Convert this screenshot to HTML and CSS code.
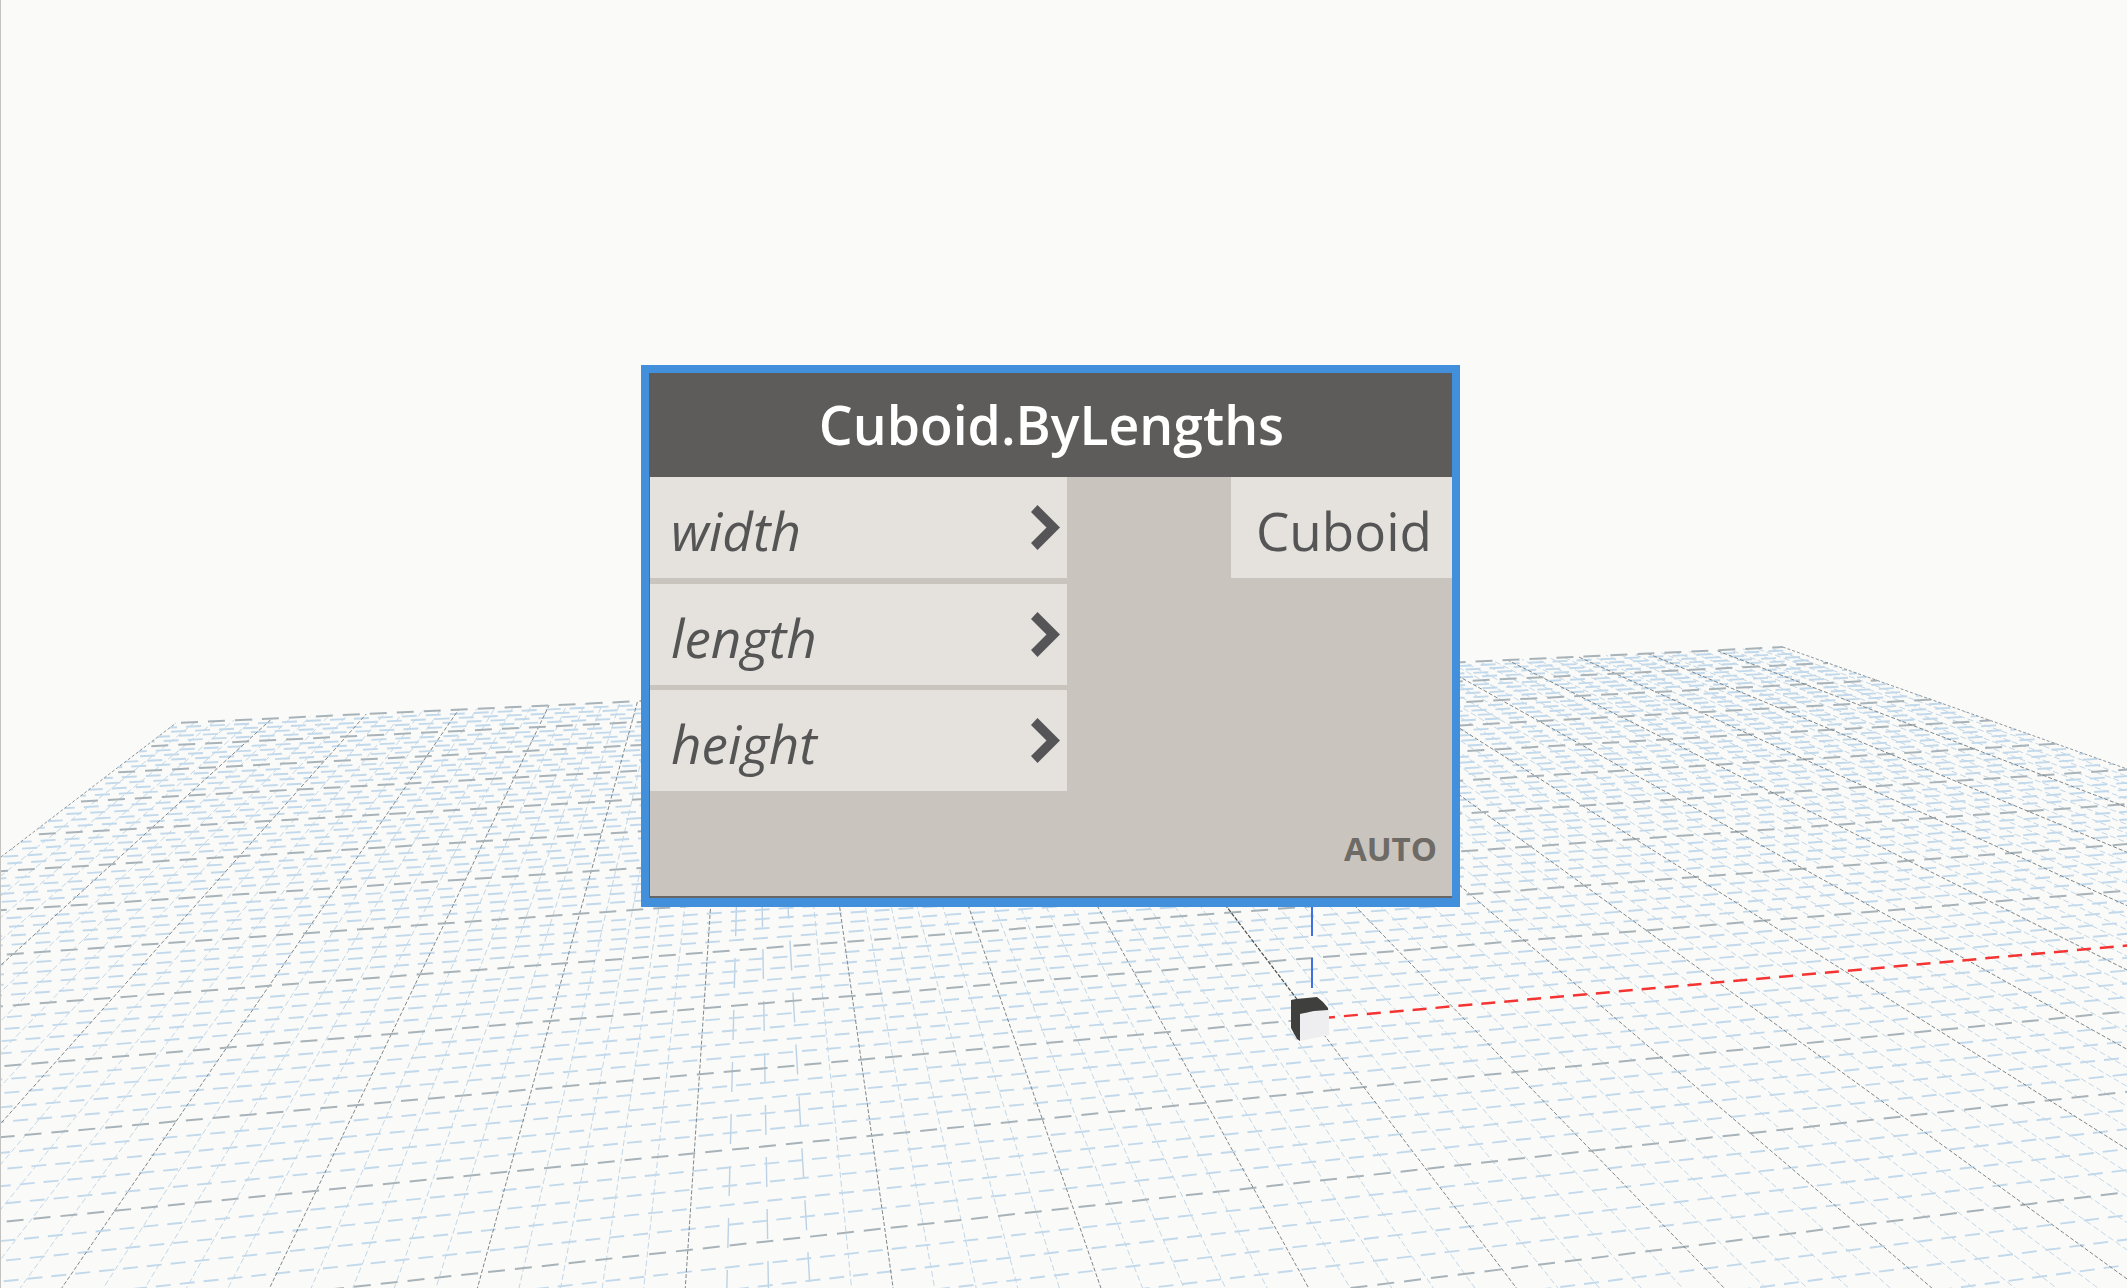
FILE: index.html
```html
<!DOCTYPE html>
<html lang="en">
<head>
<meta charset="utf-8">
<title>Cuboid.ByLengths</title>
<link rel="stylesheet" href="styles.css">
</head>
<body>
<main class="canvas">
  <svg class="scene" id="scene" width="2127" height="1288" viewBox="0 0 2127 1288" xmlns="http://www.w3.org/2000/svg">
    <g id="grid"></g>
    <line class="axis-z" x1="1312" y1="906" x2="1312" y2="991"></line>
    <polygon class="cube-light" points="1300,1014 1314,1011 1329,1008 1329,1035 1300,1041"></polygon>
    <polygon class="cube-dark" points="1291,1000 1296,999 1317,997 1323,1002 1328,1008 1328,1010 1314,1011 1300,1014 1300,1041 1297,1039 1291,1028"></polygon>
  </svg>
  <article class="node">
    <div class="node-frame">
      <header class="node-title">Cuboid.ByLengths</header>
      <div class="node-body">
        <div class="ports-in">
          <div class="port port-in"><span class="port-name">width</span><svg class="chev" width="29" height="45" viewBox="0 0 29 45"><path d="M0 7 L6.500 0 L29 22.500 L6.500 45 L0 38 L15.500 22.500 Z"></path></svg></div>
          <div class="port port-in"><span class="port-name">length</span><svg class="chev" width="29" height="45" viewBox="0 0 29 45"><path d="M0 7 L6.500 0 L29 22.500 L6.500 45 L0 38 L15.500 22.500 Z"></path></svg></div>
          <div class="port port-in"><span class="port-name">height</span><svg class="chev" width="29" height="45" viewBox="0 0 29 45"><path d="M0 7 L6.500 0 L29 22.500 L6.500 45 L0 38 L15.500 22.500 Z"></path></svg></div>
        </div>
        <div class="port port-out">Cuboid</div>
      </div>
      <div class="node-mode">AUTO</div>
    </div>
  </article>
</main>
<script src="grid.js"></script>
</body>
</html>
```
FILE: styles.css
```css
* { box-sizing: border-box; }
html, body { margin: 0; padding: 0; height: 100%; background: #fafaf8; overflow: hidden; }
.canvas {
  position: relative;
  width: 2127px;
  height: 1288px;
  background: #fafaf8;
  font-family: "Open Sans", "Noto Sans", sans-serif;
  overflow: hidden;
}
.canvas::before {
  content: "";
  position: absolute;
  left: 0; top: 0; bottom: 0;
  width: 1px;
  background: #c2c2c0;
  z-index: 3;
}
.scene { position: absolute; left: 0; top: 0; display: block; }

.g-minor-x { stroke: #c2d9eb; stroke-width: 1.9; stroke-dasharray: 15 9; fill: none; }
.g-minor-y { stroke: #c2d7e8; stroke-width: 1; stroke-dasharray: 6 3; fill: none; }
.g-minor-v { stroke: #bcd2e4; stroke-width: 1.4; stroke-dasharray: 30 22; fill: none; }
.g-major-x { stroke: #a8b3b9; stroke-width: 2; stroke-dasharray: 17 10; fill: none; }
.g-major-y { stroke: #7f878c; stroke-width: 1; stroke-dasharray: 4 2; fill: none; }
.g-edge { stroke: #8f979c; stroke-width: 1; stroke-dasharray: 3 2; fill: none; }
.axis-y { stroke: #4a4d4c; stroke-width: 1.2; stroke-dasharray: 4 1.500; fill: none; }
.axis-x { stroke: #f43333; stroke-width: 2.500; stroke-dasharray: 14 9; fill: none; }
.axis-z { stroke: #3f6fe0; stroke-width: 2; stroke-dasharray: 30 22; fill: none; }
.cube-dark { fill: #3f403e; }
.cube-light { fill: #eeeef0; }

.node {
  position: absolute;
  left: 641px;
  top: 365px;
  width: 819px;
  height: 542px;
  border: 8px solid #428fdb;
  border-bottom-width: 9px;
}
.node-frame {
  position: relative;
  display: flex;
  flex-direction: column;
  height: 100%;
  background: #c9c5be;
  border-left: 1px solid #686664;
  border-bottom: 2px solid #686664;
}
.node-title {
  height: 104px;
  flex: none;
  margin-left: -1px;
  display: flex;
  align-items: center;
  justify-content: center;
  background: #5e5c5a;
  color: #ffffff;
  font-size: 53.500px;
  font-weight: 600;
  line-height: 1;
  padding-left: 2px;
  padding-bottom: 1px;
}
.node-body {
  display: flex;
  justify-content: space-between;
  align-items: flex-start;
}
.ports-in {
  display: flex;
  flex-direction: column;
  gap: 5.5px;
  width: 417px;
}
.port {
  height: 101px;
  background: #e5e2dd;
  color: #555555;
  font-size: 53px;
  line-height: 1;
}
.port-in {
  display: flex;
  align-items: center;
  justify-content: space-between;
  padding: 0 7px 0 21px;
}
.port-name { font-style: italic; padding-top: 6px; }
.port-out {
  width: 221px;
  display: flex;
  align-items: center;
  justify-content: flex-end;
  padding: 6px 20px 0 0;
}
.chev { display: block; flex: none; }
.chev path { fill: #555558; }
.node-mode {
  position: absolute;
  right: 15px;
  bottom: 31px;
  color: #6e6a65;
  font-size: 33px;
  font-weight: 700;
  line-height: 1;
}
```
FILE: grid.js
```js
(function () {
  var VP1 = [9470, 284], VP2 = [752, 282], O = [1312, 1019];
  var G = 50, a = 0.1746 / G, b = 0.8450 / G, YMAX = 1330;
  var NS = 'http://www.w3.org/2000/svg';
  var root = document.getElementById('grid');

  function project(u, v) {
    var w = 1 + a * u + b * v;
    return [
      (a * u * VP1[0] + b * v * VP2[0] + O[0]) / w,
      (a * u * VP1[1] + b * v * VP2[1] + O[1]) / w
    ];
  }
  function seg(p, q, cls, seed) {
    var l = document.createElementNS(NS, 'line');
    l.setAttribute('x1', p[0].toFixed(2));
    l.setAttribute('y1', p[1].toFixed(2));
    l.setAttribute('x2', q[0].toFixed(2));
    l.setAttribute('y2', q[1].toFixed(2));
    l.setAttribute('class', cls);
    l.setAttribute('stroke-dashoffset', ((seed * 37) % 23).toFixed(0));
    return l;
  }
  function vNear(u) {
    var v = (YMAX - O[1] + (YMAX - VP1[1]) * a * u) / ((VP2[1] - YMAX) * b);
    return Math.max(-G, v);
  }
  function uNear(v) {
    var u = (YMAX - O[1] + (YMAX - VP2[1]) * b * v) / ((VP1[1] - YMAX) * a);
    return Math.max(-G, u);
  }

  [false, true].forEach(function (major) {
    for (var i = -G; i <= G; i++) {
      var isMajor = i % 5 === 0;
      if (isMajor !== major) continue;
      var edge = Math.abs(i) === G;

      /* lines of constant u, running toward the far vanishing point */
      if (i !== 0) {
        var p = project(i, vNear(i)), q = project(i, G);
        var slope = Math.abs((p[0] - q[0]) / (p[1] - q[1]));
        var cls = edge ? 'g-edge' : isMajor ? 'g-major-y' : slope < 0.07 ? 'g-minor-v' : 'g-minor-y';
        root.appendChild(seg(p, q, cls, i + 60));
      }

      /* lines of constant v, running toward the right */
      var us = uNear(i);
      if (us < G) {
        var r = project(us, i), s = project(G, i);
        if (i === 0) {
          root.appendChild(seg(r, project(0, 0), 'g-major-x', 3));
        } else {
          root.appendChild(seg(r, s, isMajor ? 'g-major-x' : 'g-minor-x', i + 60));
        }
      }
    }
  });

  /* axes */
  root.appendChild(seg(project(0, 0), project(0, G), 'axis-y', 1));
  root.appendChild(seg(project(0, 0), project(0, vNear(0)), 'g-major-y', 2));
  root.appendChild(seg(project(0, 0), project(G, 0), 'axis-x', 1));
})();
```
